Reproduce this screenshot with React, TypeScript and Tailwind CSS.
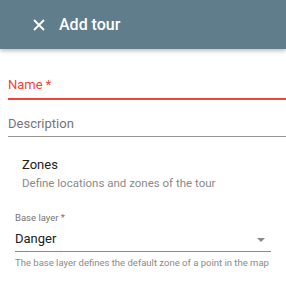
import React from 'react';

export default function App() {
  return (
    <div className="w-[286px] h-[297px] bg-white overflow-hidden" style={{ fontFamily: 'Roboto, "Liberation Sans", sans-serif' }}>
      {/* Header */}
      <header className="h-[49px] bg-[#607d8b] flex items-center shadow-[0_2px_4px_rgba(0,0,0,0.25)] relative">
        <svg className="ml-[33px] w-[12px] h-[12px]" viewBox="0 0 12 12" fill="none" stroke="white" strokeWidth="1.8">
          <path d="M1 1L11 11M11 1L1 11" />
        </svg>
        <span className="ml-[14px] text-white text-[16px] font-medium leading-none mt-[1px]">Add tour</span>
      </header>

      {/* Name */}
      <div className="pl-[8px] pt-[28px]">
        <div className="text-[13px] leading-[16px] text-[#f44336] h-[21px]">Name *</div>
        <div className="h-[2px] bg-[#f44336]" />
      </div>

      {/* Description */}
      <div className="pl-[8px] pt-[16px]">
        <div className="text-[13px] leading-[16px] text-[#757575] h-[20px]">Description</div>
        <div className="h-px bg-[#949494]" />
      </div>

      {/* Zones */}
      <div className="pl-[22px] pt-[20px]">
        <div className="text-[13px] leading-[16px] text-[#212121]">Zones</div>
        <div className="text-[11.5px] leading-[14px] text-[#8a8a8a] mt-[3px]">Define locations and zones of the tour</div>
      </div>

      {/* Base layer */}
      <div className="pl-[15px] pr-[15px] pt-[22px]">
        <div className="text-[9.5px] leading-[12px] text-[#757575]">Base layer *</div>
        <div className="flex items-center justify-between h-[25px] mt-[2px]">
          <span className="text-[13px] text-[#212121]">Danger</span>
          <svg className="w-[8px] h-[4px] mr-[6px] mt-[2px]" viewBox="0 0 8 4">
            <path d="M0 0L4 4L8 0Z" fill="#8a8a8a" />
          </svg>
        </div>
        <div className="h-px bg-[#8a8a8a]" />
        <div className="text-[9.5px] leading-[12px] text-[#8a8a8a] mt-[5px] whitespace-nowrap">The base layer defines the default zone of a point in the map</div>
      </div>
    </div>
  );
}
